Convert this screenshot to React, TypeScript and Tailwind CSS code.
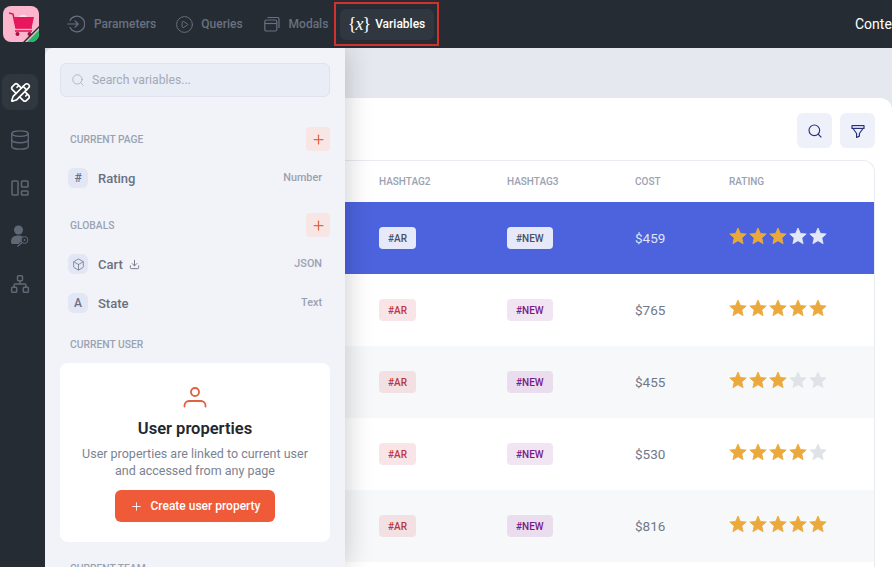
import { Box, CirclePlay, Database, Download, Network, PencilRuler, Plus, Search } from 'lucide-react';

const rows = [
  { cost: '$459', rating: 3, selected: true, striped: false },
  { cost: '$765', rating: 5, selected: false, striped: false },
  { cost: '$455', rating: 3, selected: false, striped: true },
  { cost: '$530', rating: 4, selected: false, striped: false },
  { cost: '$816', rating: 5, selected: false, striped: true },
];

function Logo() {
  return (
    <div className="relative w-9 h-9 rounded-lg bg-[#fbb6ce] overflow-hidden">
      <svg viewBox="0 0 36 36" className="w-9 h-9">
        <path d="M6 7l4 1 3 14h16" fill="none" stroke="#e0124f" strokeWidth="1.5" />
        <path d="M11 11h20l-2.5 11H13z" fill="#e8175d" />
        <path d="M16 11c1-3 7-3 8 0z" fill="#fde2ea" />
        <path d="M12 25h17" stroke="#e0124f" strokeWidth="1.5" />
        <circle cx="14.5" cy="28" r="2" fill="#a80f42" />
        <circle cx="26.5" cy="28" r="2" fill="#a80f42" />
        <path d="M36 24v12H24z" fill="#22b866" />
        <path d="M36 22L22 36h-2L36 20z" fill="#262c33" />
      </svg>
    </div>
  );
}

function ParamsIcon() {
  return (
    <svg viewBox="0 0 18 18" className="w-[18px] h-[18px]" fill="none" stroke="currentColor" strokeWidth="1.2" strokeLinecap="round" strokeLinejoin="round">
      <path d="M3 5.5A7.8 7.8 0 1 1 3 12.5" />
      <path d="M0.8 9h10.4M8 5.8L11.2 9 8 12.2" />
    </svg>
  );
}

function ModalsIcon() {
  return (
    <svg viewBox="0 0 16 16" className="w-4 h-4" fill="none" stroke="currentColor" strokeWidth="1.2" strokeLinejoin="round">
      <rect x="0.8" y="4" width="12" height="11" rx="1.5" />
      <path d="M0.8 7.5h12" />
      <path d="M3.5 1.5h10a1.5 1.5 0 0 1 1.5 1.5v9" />
    </svg>
  );
}

function PanelsIcon() {
  return (
    <svg viewBox="0 0 18 18" className="w-[18px] h-[18px]" fill="none" stroke="currentColor" strokeWidth="1.5">
      <rect x="1" y="2" width="6" height="14" rx="0.8" />
      <rect x="10.5" y="2" width="6.5" height="6" rx="0.8" />
      <rect x="10.5" y="12" width="6.5" height="4" rx="0.8" />
    </svg>
  );
}

function UserKeyIcon() {
  return (
    <svg viewBox="0 0 20 22" className="w-5 h-[22px]">
      <circle cx="8.5" cy="5" r="4.5" fill="currentColor" />
      <path d="M1 16.5c0-4 3-6 7.5-6 1.6 0 3 .3 4.2.8a5 5 0 0 0-1.6 5.2l-2.6 2.6H3c-1.2 0-2-1-2-2.6z" fill="currentColor" />
      <circle cx="14.5" cy="15" r="3.4" fill="none" stroke="currentColor" strokeWidth="1" />
      <circle cx="14.5" cy="15" r="1" fill="currentColor" />
      <path d="M12 17.5l-4.5 4" stroke="currentColor" strokeWidth="1.1" fill="none" />
    </svg>
  );
}

function UserIcon() {
  return (
    <svg viewBox="0 0 24 24" className="w-6 h-6" fill="none" stroke="#e0603f" strokeWidth="1.8" strokeLinecap="round">
      <circle cx="12" cy="7" r="4" />
      <path d="M1.5 21.5v-1c0-2.5 2-4.5 4.5-4.5h12c2.5 0 4.5 2 4.5 4.5v1" />
    </svg>
  );
}

function FilterIcon() {
  return (
    <svg viewBox="0 0 16 16" className="w-4 h-4" fill="none" stroke="currentColor" strokeWidth="1.2" strokeLinejoin="round">
      <path d="M2 2.5h12v3H2z" fill="#c9cff0" />
      <path d="M3 5.5l3.6 5v4l2.8-1.4v-2.6l3.6-5" />
    </svg>
  );
}

function Star({ on, dim }: { on: boolean; dim: boolean }) {
  const color = on ? 'text-[#eba93c]' : dim ? 'text-[#e3e8f3]' : 'text-[#dfe3e7]';
  return (
    <svg viewBox="0 0 20 20" className={`w-5 h-5 ${color}`} fill="currentColor" stroke="currentColor" strokeWidth="0.8" strokeLinejoin="round">
      <path d="M10 2l2.4 5.4 5.8.6-4.4 3.9 1.3 5.8-5.1-3-5.1 3 1.3-5.8L1.8 8l5.8-.6z" />
    </svg>
  );
}

function SectionTitle({ title, add }: { title: string; add?: boolean }) {
  return (
    <div className="flex items-center justify-between h-6 pl-[10px]">
      <span className="pt-px text-[10.3px] font-medium text-[#9aa2b1] uppercase">{title}</span>
      {add && (
        <div className="w-6 h-6 rounded bg-[#f8e6e4] flex items-center justify-center text-[#e0654a]">
          <Plus size={15} strokeWidth={2} />
        </div>
      )}
    </div>
  );
}

function VariableRow({ icon, name, type, extra }: { icon: React.ReactNode; name: string; type: string; extra?: React.ReactNode }) {
  return (
    <div className="flex items-center h-5 pl-2 pr-2">
      <div className="w-5 h-5 rounded-md bg-[#e3e7f5] flex items-center justify-center text-[#68708a] text-[12px] font-medium">{icon}</div>
      <span className="ml-[10px] pt-px text-[13px] font-medium text-[#69717f]">{name}</span>
      {extra}
      <span className="ml-auto text-[10.8px] font-medium text-[#9aa2b1]">{type}</span>
    </div>
  );
}

function Tag({ label, selected, striped }: { label: string; selected: boolean; striped: boolean }) {
  const isNew = label === '#NEW';
  let tone = isNew ? 'bg-[#f2e5f3] text-[#7a1a86]' : 'bg-[#f9e4e7] text-[#c0363f]';
  if (striped) tone = isNew ? 'bg-[#eaddee] text-[#7a1a86]' : 'bg-[#f3e0e3] text-[#b8363f]';
  if (selected) tone = 'bg-[#e5e9fa] text-[#4a5060]';
  return <span className={`flex items-center h-[22px] px-[9px] rounded text-[10px] font-medium ${tone}`}>{label}</span>;
}

export default function App() {
  return (
    <div className="w-[892px] h-[567px] overflow-hidden flex flex-col bg-[#e5e8ee] font-['Roboto',sans-serif]">
      <header className="relative z-20 h-12 shrink-0 bg-[#262c33] flex items-center pl-[3px]">
        <Logo />
        <div className="ml-7 flex items-center gap-[9px] text-[#687180]">
          <ParamsIcon />
          <span className="text-[12px] font-medium">Parameters</span>
        </div>
        <div className="ml-[19px] flex items-center gap-[7px] text-[#687180]">
          <CirclePlay size={19} strokeWidth={1.2} />
          <span className="text-[12px] font-medium">Queries</span>
        </div>
        <div className="ml-[21px] flex items-center gap-[9px] text-[#687180]">
          <ModalsIcon />
          <span className="text-[12px] font-medium">Modals</span>
        </div>
        <div className="ml-[6px] w-[105px] h-[44px] border-2 border-[#d4312d] flex items-center justify-center">
          <div className="w-[94px] h-[31px] rounded-md bg-[#31373f] flex items-center pl-2 gap-[5px] text-white">
            <span className="font-['Liberation_Serif',serif] text-[18px] tracking-[-1px] leading-none">
              {'{'}<i>x</i>{'}'}
            </span>
            <span className="text-[12px] font-medium">Variables</span>
          </div>
        </div>
        <span className="ml-auto w-[37px] overflow-hidden whitespace-nowrap text-[14px] text-white">Content</span>
      </header>

      <div className="flex flex-1 min-h-0">
        <nav className="relative z-20 w-[45px] shrink-0 bg-[#262c33] flex flex-col items-center pr-[5px] pt-[26px] text-[#5f6876]">
          <div className="w-9 h-9 rounded-lg bg-[#31373f] flex items-center justify-center text-white">
            <PencilRuler size={21} strokeWidth={1.9} />
          </div>
          <div className="h-9 mt-3 flex items-center"><Database size={22} strokeWidth={1.5} /></div>
          <div className="h-9 mt-3 flex items-center"><PanelsIcon /></div>
          <div className="h-9 mt-3 flex items-center"><UserKeyIcon /></div>
          <div className="h-9 mt-3 flex items-center"><Network size={20} strokeWidth={1.8} /></div>
        </nav>

        <aside className="relative z-10 w-[300px] shrink-0 bg-[#f1f3f8] rounded-tl-lg shadow-[0_0_28px_rgba(0,0,0,0.22)] px-[15px] pt-[15px] overflow-hidden">
          <div className="h-[34px] rounded-md bg-[#e9edf5] border border-[#dde2ec] flex items-center pl-[10px] gap-[7px] text-[#a3aab8]">
            <Search size={14} strokeWidth={1.3} />
            <span className="text-[12.2px]">Search variables...</span>
          </div>
          <div className="mt-[30px]"><SectionTitle title="Current page" add /></div>
          <div className="mt-[17px]"><VariableRow icon="#" name="Rating" type="Number" /></div>
          <div className="mt-[25px]"><SectionTitle title="Globals" add /></div>
          <div className="mt-[17px]">
            <VariableRow icon={<Box size={13} strokeWidth={1.4} />} name="Cart" type="JSON" extra={<Download size={11} className="ml-[6px] text-[#69717f]" />} />
          </div>
          <div className="mt-[19px]"><VariableRow icon="A" name="State" type="Text" /></div>
          <div className="mt-[19px]"><SectionTitle title="Current user" /></div>
          <div className="mt-[7px] h-[179px] rounded-lg bg-white flex flex-col items-center pt-[22px]">
            <UserIcon />
            <div className="mt-[8px] text-[16.5px] font-semibold leading-6 text-[#23272e]">User properties</div>
            <div className="mt-[4px] text-[12.5px] leading-[17px] text-[#7b8391] text-center">
              User properties are linked to current user
              <br />
              and accessed from any page
            </div>
            <div className="mt-[11px] w-40 h-8 rounded-md bg-[#ef5b38] flex items-center justify-center gap-2 text-white text-[12px] font-medium">
              <Plus size={13} strokeWidth={1.6} />
              Create user property
            </div>
          </div>
          <div className="mt-[14px]"><SectionTitle title="Current team" /></div>
        </aside>

        <main className="flex-1 min-w-0 pt-[50px]">
          <div className="h-full bg-white rounded-tr-xl pr-[17px]">
            <div className="h-[62px] flex items-end justify-end gap-2 pb-[12px]">
              <div className="w-[35px] h-[35px] rounded-md bg-[#eff1fa] flex items-center justify-center text-[#28337e]">
                <Search size={16} strokeWidth={1.7} />
              </div>
              <div className="w-[35px] h-[35px] rounded-md bg-[#eff1fa] flex items-center justify-center text-[#28337e]">
                <FilterIcon />
              </div>
            </div>
            <div className="h-[430px] border border-l-0 border-b-0 border-[#e8ebf0] rounded-tr-xl overflow-hidden">
              <div className="grid grid-cols-[162px_128px_94px_1fr] h-[41px] items-center text-[10px] font-medium text-[#9aa2b1]">
                <span className="pl-[34px]">HASHTAG2</span>
                <span>HASHTAG3</span>
                <span>COST</span>
                <span>RATING</span>
              </div>
              {rows.map((row, i) => (
                <div
                  key={i}
                  className={`grid grid-cols-[162px_128px_94px_1fr] h-[72px] items-center ${row.selected ? 'bg-[#4c63dd]' : row.striped ? 'bg-[#f7f8fa]' : 'bg-white'}`}
                >
                  <div className="pl-[34px] flex"><Tag label="#AR" selected={row.selected} striped={row.striped} /></div>
                  <div className="flex"><Tag label="#NEW" selected={row.selected} striped={row.striped} /></div>
                  <span className={`text-[13.5px] ${row.selected ? 'text-[#dfe4fa]' : 'text-[#70788a]'}`}>{row.cost}</span>
                  <div className="flex -ml-px -mt-1">
                    {[1, 2, 3, 4, 5].map((n) => (
                      <Star key={n} on={n <= row.rating} dim={row.selected} />
                    ))}
                  </div>
                </div>
              ))}
            </div>
          </div>
        </main>
      </div>
    </div>
  );
}
